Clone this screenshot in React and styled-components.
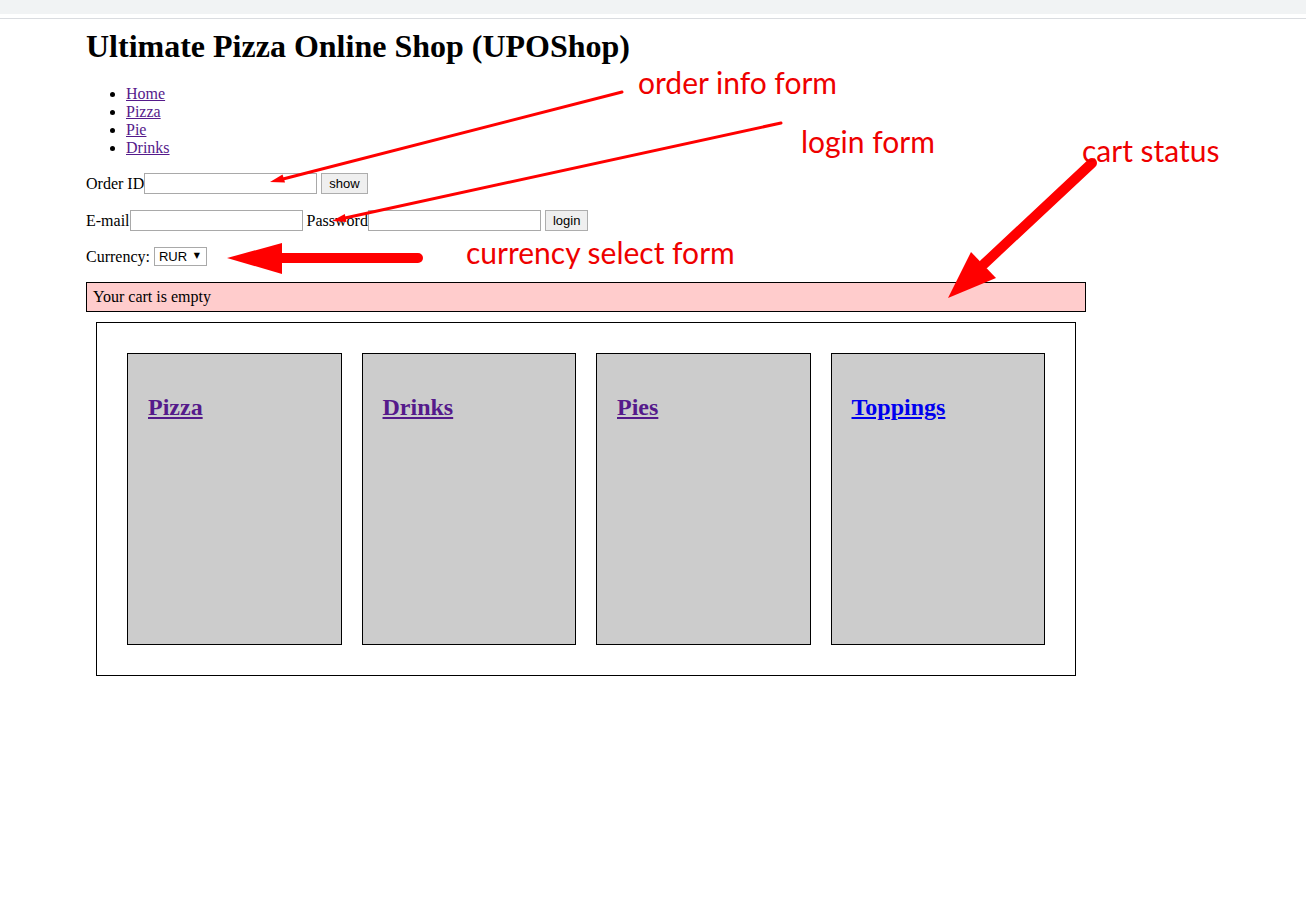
import React from "react";
import styled, { createGlobalStyle } from "styled-components";

const GlobalStyle = createGlobalStyle`
  html, body {
    margin: 0;
    padding: 0;
    background: #fff;
  }
  body {
    font-family: "Liberation Serif", "Times New Roman", serif;
    font-size: 16px;
    color: #000;
  }
`;

const categories = [
  { name: "Pizza", visited: true },
  { name: "Drinks", visited: true },
  { name: "Pies", visited: true },
  { name: "Toppings", visited: false },
];

const navLinks = ["Home", "Pizza", "Pie", "Drinks"];

export default function App() {
  return (
    <Page>
      <GlobalStyle />
      <ChromeBar />
      <ChromeLine />
      <Main>
        <Title>Ultimate Pizza Online Shop (UPOShop)</Title>
        <NavList>
          {navLinks.map((l) => (
            <li key={l}>
              <NavLink href="#">{l}</NavLink>
            </li>
          ))}
        </NavList>

        <FormRow onSubmit={(e) => e.preventDefault()}>
          <span>Order ID</span>
          <TextInput type="text" />
          <Button type="submit">show</Button>
        </FormRow>

        <FormRow onSubmit={(e) => e.preventDefault()}>
          <span>E-mail</span>
          <TextInput type="text" />
          <Label $gap={4}>Password</Label>
          <TextInput type="password" />
          <Button type="submit">login</Button>
        </FormRow>

        <FormRow onSubmit={(e) => e.preventDefault()}>
          <span>Currency:</span>
          <SelectBox>
            <Select defaultValue="RUR">
              <option>RUR</option>
              <option>USD</option>
              <option>EUR</option>
            </Select>
            <Caret>▼</Caret>
          </SelectBox>
        </FormRow>

        <CartStatus>Your cart is empty</CartStatus>

        <Categories>
          {categories.map((c) => (
            <Card key={c.name}>
              <CardTitle>
                <CardLink href="#" $visited={c.visited}>
                  {c.name}
                </CardLink>
              </CardTitle>
            </Card>
          ))}
        </Categories>
      </Main>

      <Notes>
        <svg width="1306" height="913" viewBox="0 0 1306 913">
          {/* order info */}
          <line x1="622" y1="92" x2="283" y2="179" stroke="#f00" strokeWidth="3" strokeLinecap="round" />
          <polygon points="270,182 285,182.5 282.5,174.5" fill="#f00" />
          {/* login */}
          <line x1="781" y1="123" x2="345" y2="218" stroke="#f00" strokeWidth="3" strokeLinecap="round" />
          <polygon points="332,221 346.5,222 344.8,214" fill="#f00" />
          {/* currency */}
          <line x1="280" y1="258" x2="418" y2="258" stroke="#f00" strokeWidth="10" strokeLinecap="round" />
          <polygon points="227,258 282,243 282,274" fill="#f00" />
          {/* cart status */}
          <line x1="1092" y1="163" x2="984" y2="264" stroke="#f00" strokeWidth="10" strokeLinecap="round" />
          <polygon points="948,298 996,278 971,252" fill="#f00" />
        </svg>
        <Note $x={638} $y={67}>order info form</Note>
        <Note $x={801} $y={126}>login form</Note>
        <Note $x={1082} $y={135}>cart status</Note>
        <Note $x={466} $y={237}>currency select form</Note>
      </Notes>
    </Page>
  );
}

const Page = styled.div`
  position: relative;
  min-height: 913px;
`;

const ChromeBar = styled.div`
  height: 14px;
  background: #f1f3f4;
`;

const ChromeLine = styled.div`
  height: 1px;
  margin-top: 4px;
  background: #dadce0;
`;

const Main = styled.div`
  width: 1000px;
  margin-left: 86px;
`;

const Title = styled.h1`
  font-size: 32px;
  font-weight: bold;
  line-height: 37px;
  margin: 9px 0 20px;
`;

const NavList = styled.ul`
  margin: 0 0 16px;
  padding-left: 40px;
  line-height: 18px;
`;

const NavLink = styled.a`
  color: #551a8b;
`;

const FormRow = styled.form`
  display: flex;
  align-items: center;
  margin: 0 0 16px;
  line-height: 18px;
  white-space: nowrap;
`;

const Label = styled.span`
  margin-left: ${(p) => p.$gap || 0}px;
`;

const TextInput = styled.input`
  box-sizing: border-box;
  width: 173px;
  height: 21px;
  margin: 0;
  padding: 1px 2px;
  border: 1px solid #a9a9a9;
  background: #fff;
  font: 13px "Liberation Sans", Arial, sans-serif;
  outline: none;
`;

const Button = styled.button`
  box-sizing: border-box;
  height: 21px;
  margin: 0 0 0 4px;
  padding: 0 7px;
  border: 1px solid #adadad;
  background: #efefef;
  color: #000;
  font: 13px "Liberation Sans", Arial, sans-serif;
`;

const SelectBox = styled.span`
  box-sizing: border-box;
  display: inline-flex;
  align-items: center;
  height: 19px;
  width: 53px;
  margin-left: 4px;
  border: 1px solid #a9a9a9;
  background: #fff;
  position: relative;
`;

const Select = styled.select`
  appearance: none;
  border: none;
  background: transparent;
  width: 100%;
  height: 100%;
  padding: 0 0 0 4px;
  margin: 0;
  font: 13px "Liberation Sans", Arial, sans-serif;
  color: #000;
  outline: none;
`;

const Caret = styled.span`
  position: absolute;
  right: 6px;
  top: 3px;
  font: 8px "DejaVu Sans", sans-serif;
  pointer-events: none;
`;

const CartStatus = styled.div`
  border: 1px solid #000;
  background: #ffcccc;
  padding: 5px 6px;
  line-height: 18px;
`;

const Categories = styled.div`
  display: flex;
  gap: 20px;
  margin: 10px 10px 0;
  padding: 30px;
  border: 1px solid #000;
`;

const Card = styled.div`
  flex: 1;
  box-sizing: border-box;
  height: 292px;
  padding: 0 20px;
  background: #ccc;
  border: 1px solid #000;
  overflow: hidden;
`;

const CardTitle = styled.h2`
  font-size: 24px;
  font-weight: bold;
  line-height: 28px;
  margin: 39px 0 0;
`;

const CardLink = styled.a`
  color: ${(p) => (p.$visited ? "#551a8b" : "#0000ee")};
`;

const Notes = styled.div`
  position: absolute;
  inset: 0;
  pointer-events: none;

  svg {
    position: absolute;
    left: 0;
    top: 0;
  }
`;

const Note = styled.div`
  position: absolute;
  left: ${(p) => p.$x}px;
  top: ${(p) => p.$y}px;
  font-family: Lato, "Open Sans", sans-serif;
  font-size: 30px;
  line-height: 1;
  color: #ee0000;
  white-space: nowrap;
`;
